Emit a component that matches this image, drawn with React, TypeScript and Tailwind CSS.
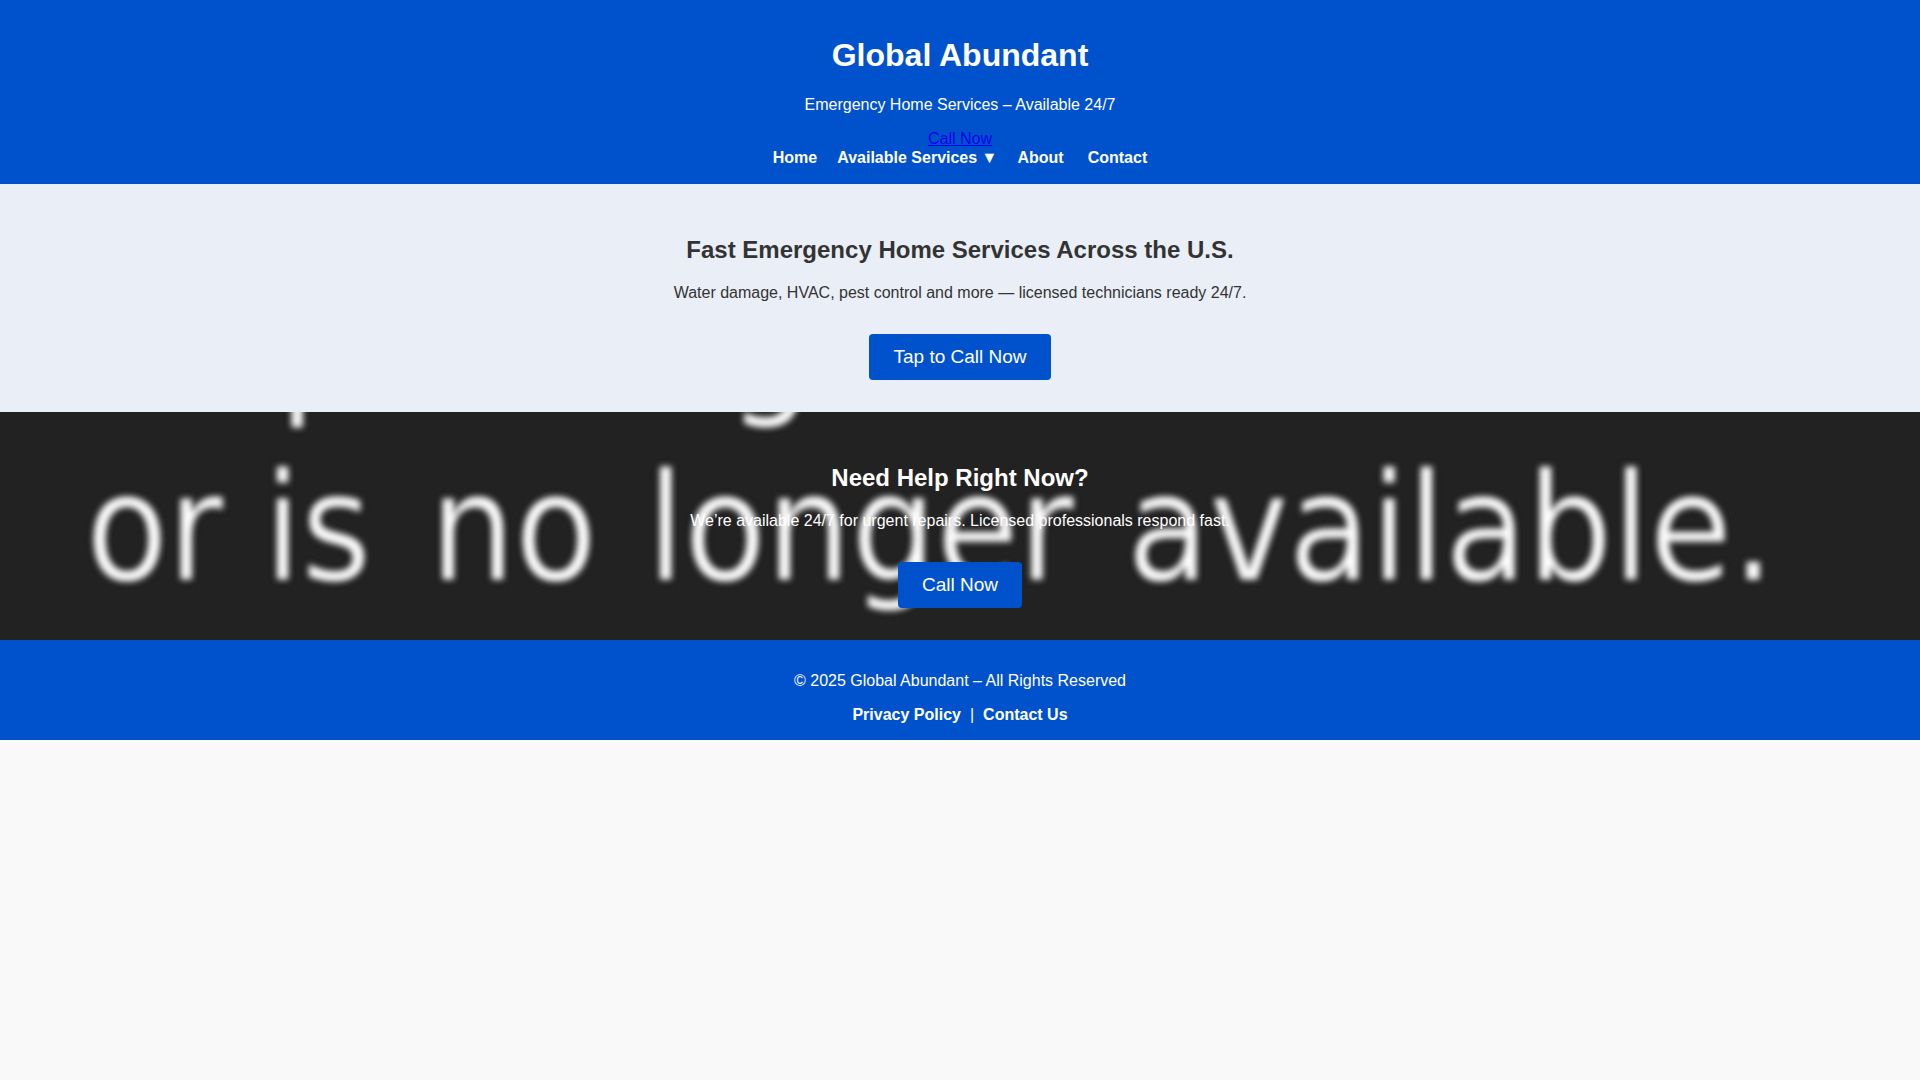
import type { ReactNode } from "react";

const BANNER_WORDS = [
  { text: "requesting", x: 96, y: 354 },
  { text: "or", x: 86, y: 537 },
  { text: "is", x: 264, y: 537 },
  { text: "no", x: 430, y: 537 },
  { text: "longer", x: 647, y: 537 },
  { text: "available.", x: 1127, y: 537 },
];

// Covers the section like a background image, centred and cropped.
function BannerBackground() {
  return (
    <svg
      aria-hidden="true"
      className="absolute inset-0 h-full w-full"
      viewBox="0 0 1920 966"
      preserveAspectRatio="xMidYMid slice"
    >
      <defs>
        <filter id="soften">
          <feGaussianBlur stdDeviation="3" />
        </filter>
      </defs>
      {/* the outline in the section colour keeps the letters thin */}
      <g
        filter="url(#soften)"
        fill="#ffffff"
        stroke="#222222"
        strokeWidth="3"
        className="font-['DejaVu_Sans_Condensed','DejaVu_Sans',sans-serif] text-[149px]"
      >
        {BANNER_WORDS.map((word) => (
          <text key={word.text} x={word.x} y={word.y}>
            {word.text}
          </text>
        ))}
      </g>
    </svg>
  );
}

function CallButton({ children }: { children: ReactNode }) {
  return (
    <button
      type="button"
      className="mt-8 cursor-pointer rounded bg-[#0052cc] px-6 py-3 text-[19px] leading-[22px] text-white"
    >
      {children}
    </button>
  );
}

function Header() {
  return (
    <header className="flex flex-col items-center bg-[#0052cc] px-4 pt-9 pb-4 text-white">
      <h1 className="text-[32px] leading-[38px] font-bold">Global Abundant</h1>
      <p className="mt-[22px]">Emergency Home Services – Available 24/7</p>
      <a href="#call" className="mt-4 text-[#0000ee] underline">
        Call Now
      </a>
      <nav className="flex flex-wrap justify-center gap-x-5 font-bold leading-5">
        <a href="#home">Home</a>
        <button type="button" className="cursor-pointer font-bold">
          Available Services ▼
        </button>
        <div className="flex gap-x-6">
          <a href="#about">About</a>
          <a href="#contact">Contact</a>
        </div>
      </nav>
    </header>
  );
}

function Footer() {
  return (
    <footer className="flex flex-col items-center bg-[#0052cc] px-4 pt-8 pb-4 text-white">
      <p>© 2025 Global Abundant – All Rights Reserved</p>
      <div className="mt-4 flex gap-[9px]">
        <a href="#privacy" className="font-bold">
          Privacy Policy
        </a>
        <span>|</span>
        <a href="#contact" className="font-bold">
          Contact Us
        </a>
      </div>
    </footer>
  );
}

export default function App() {
  return (
    <div className="min-h-screen bg-[#f9f9f9] font-['Liberation_Sans',Arial,sans-serif] text-base leading-[18px] text-[#333333]">
      <Header />
      <main>
        <section className="flex flex-col items-center bg-[#eaeff7] px-5 pt-[52px] pb-8 text-center">
          <h2 className="text-2xl leading-7 font-bold">
            Fast Emergency Home Services Across the U.S.
          </h2>
          <p className="mt-5">
            Water damage, HVAC, pest control and more — licensed technicians ready 24/7.
          </p>
          <CallButton>Tap to Call Now</CallButton>
        </section>
        <section className="relative overflow-hidden bg-[#222222] text-white">
          <BannerBackground />
          <div className="relative flex flex-col items-center px-5 pt-[52px] pb-8 text-center">
            <h2 className="text-2xl leading-7 font-bold">Need Help Right Now?</h2>
            <p className="mt-5">
              We’re available 24/7 for urgent repairs. Licensed professionals respond fast.
            </p>
            <CallButton>Call Now</CallButton>
          </div>
        </section>
      </main>
      <Footer />
    </div>
  );
}
